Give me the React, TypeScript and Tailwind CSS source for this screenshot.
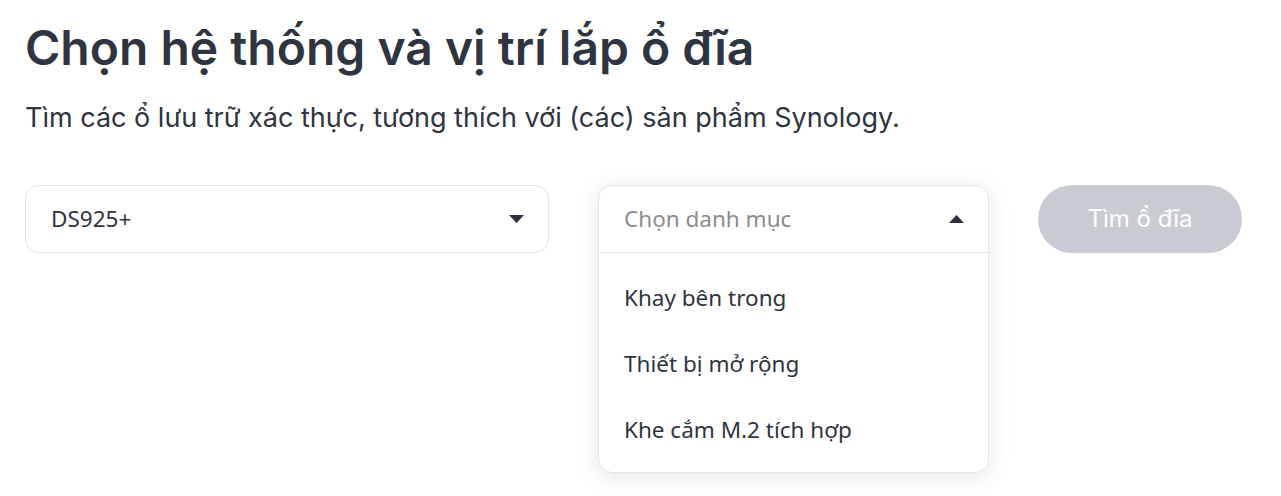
import React from "react";

function Caret({ up }: { up?: boolean }) {
  return (
    <svg width="15" height="8" viewBox="0 0 15 8" className="shrink-0">
      {up ? <path d="M0 8 L7.5 0 L15 8 Z" fill="#2b303a" /> : <path d="M0 0 L15 0 L7.5 8 Z" fill="#2b303a" />}
    </svg>
  );
}

export default function App() {
  const items = ["Khay bên trong", "Thiết bị mở rộng", "Khe cắm M.2 tích hợp"];
  return (
    <div className="w-[1281px] h-[496px] bg-white pl-[25px] pt-[20px] overflow-hidden" style={{ fontFamily: "Inter, 'Noto Sans', sans-serif" }}>
      <h1 className="text-[48px] leading-[56px] font-semibold text-[#2e3440]">Chọn hệ thống và vị trí lắp ổ đĩa</h1>
      <p className="mt-[24px] text-[27px] leading-[36px] text-[#2e3440]">Tìm các ổ lưu trữ xác thực, tương thích với (các) sản phẩm Synology.</p>
      <div className="mt-[49px] flex items-start gap-[49px]">
        <div className="w-[524px] h-[68px] rounded-[14px] border border-[#e6e6e6] flex items-center justify-between pl-[25px] pr-[24px]">
          <span className="text-[22.5px] text-[#2e3440]" style={{ fontFamily: "'Noto Sans', sans-serif" }}>DS925+</span>
          <Caret />
        </div>
        <div className="w-[391px] rounded-[14px] border border-[#e6e6e6] bg-white shadow-[0_4px_24px_rgba(0,0,0,0.10)]" style={{ fontFamily: "'Noto Sans', sans-serif" }}>
          <div className="h-[67px] flex items-center justify-between pl-[25px] pr-[24px] border-b border-[#e6e6e6]">
            <span className="text-[22.5px] text-[#8c8c8c]">Chọn danh mục</span>
            <Caret up />
          </div>
          <div className="pt-[12px] pb-[9px]">
            {items.map((t) => (
              <div key={t} className="h-[66px] flex items-center px-[25px] text-[22.5px] text-[#2e3440]">{t}</div>
            ))}
          </div>
        </div>
        <button className="w-[204px] h-[68px] rounded-full bg-[#c8cbd2] text-white text-[24px]">Tìm ổ đĩa</button>
      </div>
    </div>
  );
}
